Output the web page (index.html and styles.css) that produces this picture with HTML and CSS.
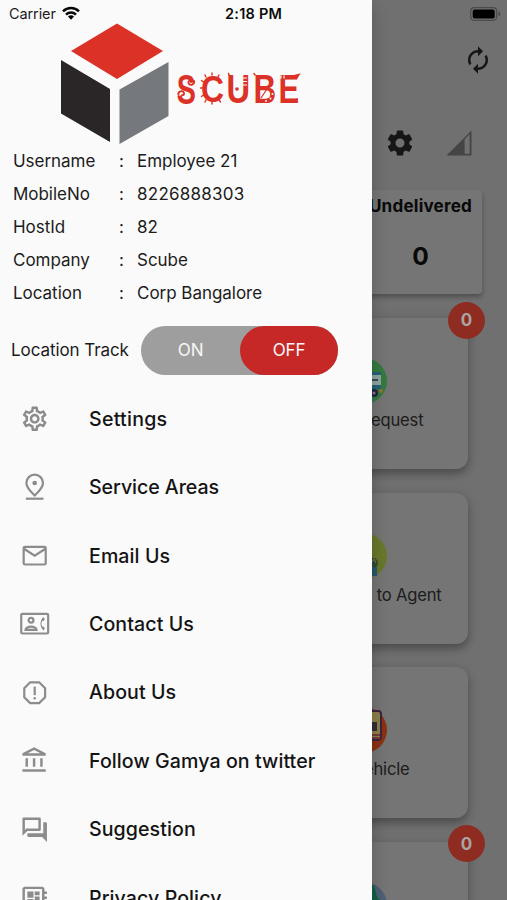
FILE: index.html
```html
<!DOCTYPE html>
<html lang="en">
<head>
<meta charset="utf-8">
<title>Scube</title>
<link rel="stylesheet" href="styles.css">
</head>
<body>
<svg width="0" height="0" class="defs" aria-hidden="true">
  <symbol id="gear" viewBox="0 0 24 24"><path fill-rule="evenodd" d="M19.43 12.98c.04-.32.07-.64.07-.98 0-.34-.03-.66-.07-.98l2.11-1.65c.19-.15.24-.42.12-.64l-2-3.46c-.09-.16-.26-.25-.44-.25-.06 0-.12.01-.17.03l-2.49 1c-.52-.4-1.08-.73-1.69-.98l-.38-2.65C14.46 2.18 14.25 2 14 2h-4c-.25 0-.46.18-.49.42l-.38 2.65c-.61.25-1.17.59-1.69.98l-2.49-1c-.06-.02-.12-.03-.18-.03-.17 0-.34.09-.43.25l-2 3.46c-.13.22-.07.49.12.64l2.11 1.65c-.04.32-.07.65-.07.98 0 .33.03.66.07.98l-2.11 1.65c-.19.15-.24.42-.12.64l2 3.46c.09.16.26.25.44.25.06 0 .12-.01.17-.03l2.49-1c.52.4 1.08.73 1.69.98l.38 2.65c.03.24.24.42.49.42h4c.25 0 .46-.18.49-.42l.38-2.65c.61-.25 1.17-.59 1.69-.98l2.49 1c.06.02.12.03.18.03.17 0 .34-.09.43-.25l2-3.46c.12-.22.07-.49-.12-.64l-2.11-1.65zM12 8.4a3.6 3.6 0 1 0 0 7.2 3.6 3.6 0 0 0 0-7.2z"/></symbol>
</svg>
<div class="screen">
  <main class="page">
    <div class="toolbar">
      <svg class="icon30" viewBox="0 0 24 24"><path d="M12 6v3l4-4-4-4v3c-4.42 0-8 3.58-8 8 0 1.57.46 3.03 1.24 4.26L6.7 14.8c-.45-.83-.7-1.79-.7-2.8 0-3.31 2.69-6 6-6zm6.76 1.74L17.3 9.2c.44.84.7 1.79.7 2.8 0 3.31-2.69 6-6 6v-3l-4 4 4 4v-3c4.42 0 8-3.58 8-8 0-1.57-.46-3.03-1.24-4.26z"/></svg>
    </div>
    <div class="tools">
      <svg class="icon30" viewBox="0 0 24 24"><use href="#gear"/></svg>
      <svg class="icon30 signal" viewBox="0 0 24 24"><path fill-rule="evenodd" d="M2 22H22V2zM16.500 9L20.500 5V20.500H16.500z"/></svg>
    </div>
    <section class="stat"><h2>Undelivered</h2><strong>0</strong></section>
    <div class="cards">
      <section class="card">
        <span class="badge">0</span>
        <svg class="pic" viewBox="0 0 46 46"><circle cx="23" cy="23" r="23" fill="#347a3f"/><path d="M20 17h20v11H20z" fill="#8fa4a0"/><path d="M20 14h20v3H20zM20 27h20v4H20z" fill="#285f78"/><path d="M31 22h6" stroke="#334f58" stroke-width="2"/><circle cx="33" cy="35" r="4" fill="#252545"/><circle cx="33" cy="35" r="1.5" fill="#807e88"/><circle cx="40" cy="33" r="2" fill="#977230"/></svg>
        <span class="label request">Request</span>
      </section>
      <section class="card">
        <svg class="pic" viewBox="0 0 46 46"><circle cx="23" cy="23" r="23" fill="#68782b"/><circle cx="32" cy="30" r="5" fill="#304a32"/><path d="M28 34h8v9h-8z" fill="#24576c"/><path d="M31 29l2-3 2 4" fill="none" stroke="#78814d"/></svg>
        <span class="label agent">to Agent</span>
      </section>
      <section class="card">
        <svg class="pic" viewBox="0 0 46 46"><circle cx="23" cy="23" r="23" fill="#8b3210"/><rect x="18" y="4" width="22" height="29" rx="3" fill="#8c814b" stroke="#3d2340" stroke-width="2"/><path d="M26 15h10v9H26z" fill="#352d35"/><path d="M25 28h14M25 31h14" stroke="#753b3e" stroke-width="2"/></svg>
        <span class="label vehicle">Vehicle</span>
      </section>
      <section class="card">
        <span class="badge">0</span>
        <svg class="pic" viewBox="0 0 46 46"><circle cx="23" cy="23" r="23" fill="#4d6074"/><path d="M23 6l10-3 3 12 3 3v7H20z" fill="#126144"/></svg>
      </section>
    </div>
  </main>

  <aside class="drawer">
    <div class="logo">
      <svg width="304" height="124" viewBox="0 0 304 124" role="img" aria-label="Scube">
        <path d="M117 1.500L163 29 117 57 71 29z" fill="#dc3126"/>
        <path d="M61 38l49 29v53l-49-28.500z" fill="#2a2526"/>
        <path d="M168.500 40v54L119.500 122V67.500z" fill="#75787c"/>
        <g class="wordmark">
          <text transform="translate(176.800 81.500) scale(.67 1)">S</text>
          <text transform="translate(201 80) scale(.74 .86)">C</text>
          <text transform="translate(226.500 81) scale(.76 .96)">U</text>
          <text transform="translate(253.500 81) scale(.73 .96)">B</text>
          <text transform="translate(278.500 81) scale(.72 .96)">E</text>
        </g>
        <g fill="none" stroke="#dc3126" stroke-width="1.800" stroke-linecap="round">
          <path d="M194 59c1 3-3 5-5 3-1.500-2 0-4 1.500-3M178.500 73c-1-3 3-5 5-3 1.500 2 0 4-1.500 3"/>
          <path d="M206 55l-1-2M212 53v-2M218 55l1-2M203.500 60l-2-1.500M202.500 66h-2M203.500 73l-2 1.500M206 78l-1 2M212 80v2M219 78l1.500 2" stroke-width="1.400"/>
          <path d="M229.500 54l-1-2.500M255 53l-1-1.500M295 53.500l4-1-2 3M295 79.500l2-2.500" stroke-width="1.500"/>
        </g>
        <circle cx="237" cy="67" r="1.800" fill="#dc3126"/>
        <g fill="none" stroke="#fafafa" stroke-width="1.200"><path d="M243 56h4M243 59.500h4M243 63h4M281 53.500v3M284 53.500v3"/></g>
        <path d="M261 76l6-9" stroke="#dc3126" stroke-width="1.200"/>
        <g fill="#fafafa"><circle cx="266" cy="79" r="1"/><circle cx="270.500" cy="76.500" r="1"/><circle cx="272.500" cy="72" r="1"/></g>
      </svg>
    </div>
    <dl class="info">
      <dt>Username</dt><dd>:</dd><dd>Employee 21</dd>
      <dt>MobileNo</dt><dd>:</dd><dd class="number">8226888303</dd>
      <dt>HostId</dt><dd>:</dd><dd>82</dd>
      <dt>Company</dt><dd>:</dd><dd>Scube</dd>
      <dt>Location</dt><dd>:</dd><dd>Corp Bangalore</dd>
    </dl>
    <div class="track">
      <span class="track-label">Location Track</span>
      <div class="toggle"><span>ON</span><span class="off">OFF</span></div>
    </div>
    <nav class="menu">
      <a><svg viewBox="0 0 24 24"><path d="M19.430 12.980c.04-.32.07-.64.07-.98 0-.34-.03-.66-.07-.98l2.110-1.650c.19-.15.24-.42.12-.64l-2-3.460c-.09-.16-.26-.25-.44-.25-.06 0-.12.010-.17.030l-2.490 1c-.52-.4-1.080-.73-1.690-.98l-.38-2.650C14.460 2.180 14.250 2 14 2h-4c-.25 0-.46.180-.49.420l-.38 2.650c-.61.250-1.170.590-1.690.980l-2.490-1c-.06-.02-.12-.03-.18-.03-.17 0-.34.090-.43.250l-2 3.460c-.13.220-.07.490.12.640l2.110 1.650c-.04.320-.07.650-.07.980 0 .330.030.660.070.980l-2.110 1.650c-.19.150-.24.420-.12.640l2 3.460c.09.160.260.250.440.250.060 0 .120-.01.170-.03l2.490-1c.52.400 1.080.730 1.690.980l.38 2.650c.03.240.240.420.490.420h4c.25 0 .46-.18.49-.42l.38-2.650c.61-.25 1.170-.59 1.690-.98l2.490 1c.06.020.120.030.180.030.170 0 .340-.09.430-.25l2-3.460c.12-.22.070-.49-.12-.64l-2.110-1.650zm-1.980-1.710c.04.310.050.520.050.730 0 .210-.02.430-.05.730l-.14 1.130.89.700 1.080.840-.7 1.210-1.270-.51-1.040-.42-.9.680c-.43.320-.84.560-1.250.730l-1.060.430-.16 1.130-.2 1.350h-1.400l-.19-1.350-.16-1.130-1.060-.43c-.43-.18-.83-.41-1.230-.71l-.91-.7-1.060.430-1.270.510-.7-1.210 1.080-.84.890-.7-.14-1.130c-.03-.31-.05-.54-.05-.74s.020-.43.050-.73l.14-1.130-.89-.7-1.080-.84.700-1.210 1.270.510 1.040.420.900-.68c.43-.32.840-.56 1.250-.73l1.060-.43.160-1.130.200-1.350h1.390l.19 1.350.160 1.130 1.060.430c.43.180.830.410 1.230.710l.91.700 1.060-.43 1.270-.51.700 1.210-1.070.850-.89.700.140 1.130zM12 8c-2.210 0-4 1.790-4 4s1.790 4 4 4 4-1.790 4-4-1.790-4-4-4zm0 6c-1.100 0-2-.9-2-2s.900-2 2-2 2 .900 2 2-.9 2-2 2z"/></svg><span>Settings</span></a>
      <a><svg viewBox="0 0 24 24"><path class="line thin" d="M18.800 9c0 3.300-2.500 6.200-6.800 10.200C7.700 15.200 5.200 12.300 5.200 9a6.800 6.800 0 0 1 13.600 0z"/><path class="line thin" d="M4.800 21.800h14.400"/><circle cx="12" cy="9" r="1.900"/></svg><span>Service Areas</span></a>
      <a><svg viewBox="0 0 24 24"><path class="line thin" d="M4 4.800h16a1 1 0 0 1 1 1v12.400a1 1 0 0 1-1 1H4a1 1 0 0 1-1-1V5.800a1 1 0 0 1 1-1zM3.500 6.500L12 12l8.500-5.500"/></svg><span>Email Us</span></a>
      <a><svg viewBox="0 0 24 24"><path class="line thin" d="M2 4h20a1 1 0 0 1 1 1v14a1 1 0 0 1-1 1H2a1 1 0 0 1-1-1V5a1 1 0 0 1 1-1z"/><circle class="line thin" cx="9" cy="9.200" r="2"/><path class="line thin" d="M4.500 17c0-1.700 2.500-2.600 4.500-2.600s4.500.9 4.500 2.600z"/><path d="M20.400 15.900l-1.500 1.600a7.900 7.900 0 0 1 0-11l1.500 1.600-1.200 1.600h-1.200a6.200 6.200 0 0 0 0 4.600h1.200z"/></svg><span>Contact Us</span></a>
      <a><svg viewBox="0 0 24 24"><path class="line thin" d="M8.300 3.500h7.400L20.500 8.300v7.400L15.700 20.500H8.300L3.500 15.700V8.300z"/><path d="M11.100 7h1.800v7h-1.800z"/><circle cx="12" cy="16.500" r="1"/></svg><span>About Us</span></a>
      <a><svg viewBox="0 0 24 24"><path d="M6.500 10h-2v7h2zm6 0h-2v7h2zM21 19H2v2h19zM18.500 10h-2v7h2zM11.500 3.260L16.710 6H6.290l5.210-2.740zM11.500 1L2 6v2h19V6z"/></svg><span>Follow Gamya on twitter</span></a>
      <a><svg viewBox="0 0 24 24"><path d="M15 4v7H5.170L4 12.170V4h11m1-2H3c-.55 0-1 .45-1 1v14l4-4h10c.55 0 1-.45 1-1V3c0-.55-.45-1-1-1zm5 4h-2v9H6v2c0 .55.45 1 1 1h11l4 4V7c0-.55-.45-1-1-1z"/></svg><span>Suggestion</span></a>
      <a><svg viewBox="0 0 24 24"><path d="M22 9V7h-2V5c0-1.100-.9-2-2-2H4c-1.100 0-2 .9-2 2v14c0 1.100.9 2 2 2h14c1.100 0 2-.9 2-2v-2h2v-2h-2v-2h2v-2h-2V9h2zm-4 10H4V5h14v14zM6 13h5v4H6zm6-6h4v3h-4zM6 7h5v5H6zm6 4h4v6h-4z"/></svg><span>Privacy Policy</span></a>
    </nav>
  </aside>

  <header class="status">
    <span class="carrier">Carrier</span>
    <svg class="wifi" viewBox="0 0 18 14"><g fill="none" stroke="#080808" stroke-width="2.500"><path d="M1 5.300a11.500 11.500 0 0 1 16 0M4 8.600a7.200 7.200 0 0 1 10 0"/></g><path d="M6 10.600a4.300 4.300 0 0 1 6 0l-3 3.100z"/></svg>
    <time>2:18 PM</time>
    <svg class="battery" viewBox="0 0 31 14"><rect x=".7" y=".7" width="26" height="12.600" rx="3.500" fill="none" stroke="#4b4b4b" stroke-width="1.200"/><rect x="2.700" y="2.500" width="22" height="9" rx="2"/><path d="M28.500 4.500c2.500.8 2.500 4.200 0 5z" fill="#4b4b4b"/></svg>
  </header>
</div>
</body>
</html>
```
FILE: styles.css
```css
* { box-sizing: border-box; }
body { margin: 0; font-family: Inter, "Liberation Sans", sans-serif; color: #1c1c1c; }
.defs { position: absolute; }
.screen { position: relative; width: 507px; height: 900px; overflow: hidden; background: #707070; }

.status { position: absolute; top: 0; left: 0; width: 507px; height: 27px; padding: 0 6px 0 9px; display: flex; align-items: center; }
.carrier { width: 53px; font-size: 14.5px; letter-spacing: -.1px; }
.wifi { width: 18px; height: 14px; margin-top: -2px; }
.status time { margin-left: 145px; font-size: 14.5px; font-weight: 600; letter-spacing: .25px; color: #0c0c0c; white-space: nowrap; }
.battery { width: 31px; height: 14px; margin-left: auto; }

.page { display: flex; flex-direction: column; align-items: flex-end; height: 900px; padding-top: 45px; }
.icon30 { display: block; width: 30px; height: 30px; fill: #161616; }
.toolbar { padding-right: 14.5px; }
.tools { display: flex; gap: 29px; margin-top: 53px; padding-right: 33.5px; }
.signal { fill: #454545; }
.stat { width: 123px; height: 104px; margin: 32px 25px 0 0; flex: none; text-align: center; background: #757575; border-radius: 4px; box-shadow: 0 3px 5px rgba(0,0,0,.3); color: #090909; }
.stat h2 { margin: 5px 0 0; font-size: 17.1px; line-height: 22px; font-weight: 700; letter-spacing: .2px; }
.stat strong { display: block; margin-top: 23px; font-size: 24.5px; line-height: 32px; font-weight: 700; }
.cards { display: flex; flex-direction: column; gap: 23.5px; margin: 24px 39.5px 0 0; }
.card { position: relative; flex: none; width: 208px; height: 151px; padding-top: 40px; display: flex; flex-direction: column; align-items: center; background: #757575; border-radius: 12px; box-shadow: 0 5px 9px rgba(0,0,0,.28), 0 1px 14px rgba(0,0,0,.08); }
.pic { width: 46px; height: 46px; }
.label { align-self: flex-end; margin-top: 5px; font-size: 16.6px; line-height: 22px; letter-spacing: -.2px; }
.request { padding-right: 44px; letter-spacing: -.15px; }
.agent { padding-right: 26px; }
.vehicle { padding-right: 58px; }
.badge { position: absolute; top: -16.5px; right: -17.5px; width: 37px; height: 37px; border-radius: 50%; display: grid; place-items: center; background: #8f2c22; color: #aaa4a2; font-size: 17px; font-weight: 700; }

.drawer { position: absolute; top: 0; left: 0; width: 372.4px; height: 900px; overflow: hidden; padding-top: 22px; background: #fafafa; box-shadow: 0 8px 16px rgba(0,0,0,.22); }
.logo { height: 124px; }
.logo svg { display: block; }
.wordmark { font: 700 43px "Liberation Sans", sans-serif; fill: #dc3126; }
.info { display: grid; grid-template-columns: 106px 18px 1fr; grid-auto-rows: 33px; align-items: center; margin: -1.5px 0 0 13px; font-size: 17px; letter-spacing: -.03px; }
.info dd { margin: 0; }
.info .number { letter-spacing: .25px; }
.track { display: flex; align-items: center; height: 49px; margin: 16px 0 0 11px; font-size: 17px; letter-spacing: -.08px; }
.track-label { width: 130.3px; padding-bottom: 1px; white-space: nowrap; }
.toggle { display: flex; width: 197px; height: 49px; border-radius: 25px; background: #9e9e9e; color: #f7f7f7; }
.toggle span { width: 98.5px; display: grid; place-items: center; padding-bottom: 1px; letter-spacing: -.1px; }
.toggle .off { background: #c62828; border-radius: 25px; }
.menu { margin-top: 10px; }
.menu a { display: flex; align-items: center; height: 68.45px; padding-left: 20.3px; font-size: 19.6px; font-weight: 500; letter-spacing: .08px; color: #141414; }
.menu svg { width: 29.4px; height: 29.4px; margin-right: 39.3px; fill: #8c8c8c; }
.menu a:first-child { letter-spacing: .25px; }
.menu a:nth-child(2) { letter-spacing: -.05px; }
.menu .line { fill: none; stroke: #8c8c8c; stroke-width: 2; }
.menu .thin { stroke-width: 1.8; }
```
